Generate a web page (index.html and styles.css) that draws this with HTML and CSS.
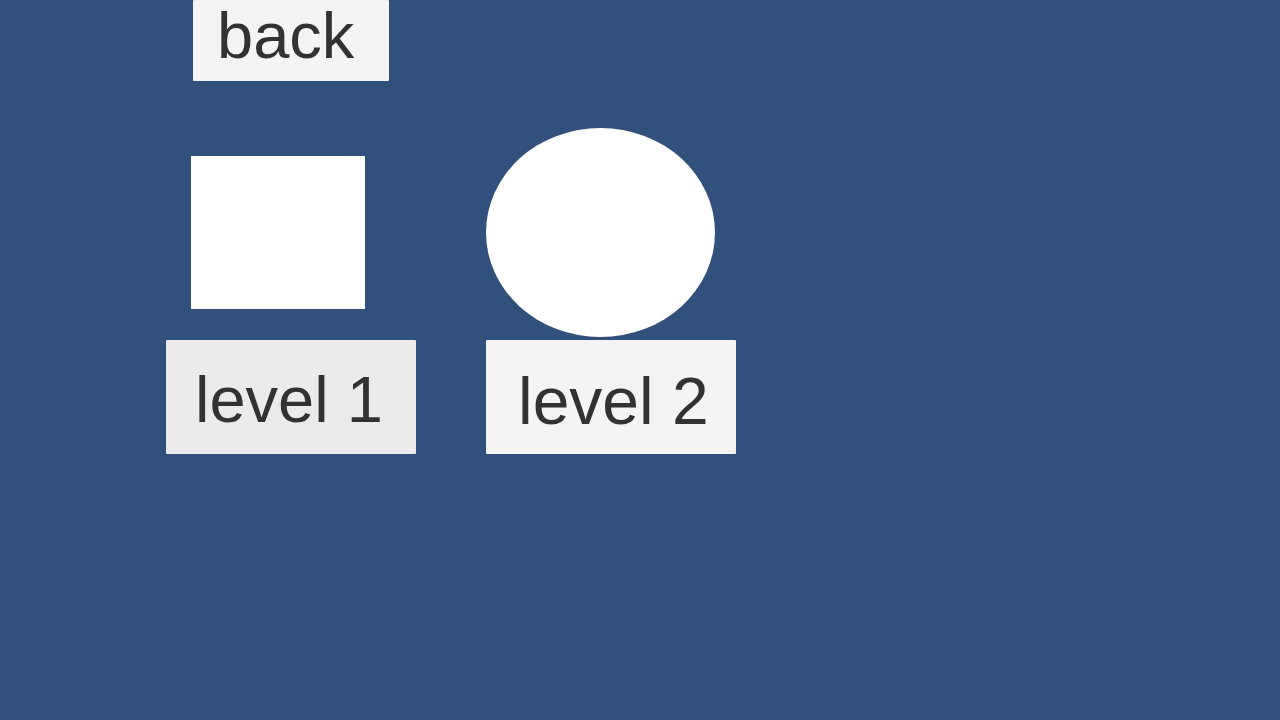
FILE: index.html
```html
<!DOCTYPE html>
<html>
<head>
<meta charset="utf-8">
<link rel="stylesheet" href="styles.css">
</head>
<body>
<div class="scene">
  <div class="btn btn-back"><span>back</span></div>
  <div class="spacer"></div>
  <div class="shape square"></div>
  <div class="shape circle"></div>
  <div class="btn btn-l1"><span>level 1</span></div>
  <div class="btn btn-l2"><span>level 2</span></div>
</div>
</body>
</html>
```
FILE: styles.css
```css
html, body {
  margin: 0;
  padding: 0;
  width: 1280px;
  height: 720px;
  overflow: hidden;
  background: #31507c;
}
.scene {
  display: grid;
  grid-template-columns: 250px 250px;
  grid-template-rows: 81px 259px 114px;
  column-gap: 70px;
  padding-left: 166px;
  font-family: "Liberation Sans", Arial, sans-serif;
  color: #323232;
}
.btn {
  box-sizing: border-box;
  line-height: 1;
  white-space: nowrap;
  border-radius: 1px;
}
.btn-back {
  margin-left: 27px;
  width: 196px;
  height: 81px;
  background: #f4f4f4;
  font-size: 65px;
  padding-top: 3px;
  padding-left: 24px;
}
.square {
  margin-top: 75px;
  margin-left: 25px;
  width: 174px;
  height: 153px;
  background: #ffffff;
}
.circle {
  margin-top: 47px;
  width: 229px;
  height: 209px;
  border-radius: 50%;
  background: #ffffff;
}
.btn-l1 {
  width: 250px;
  height: 114px;
  background: #ebebeb;
  font-size: 65px;
  padding-top: 27px;
  padding-left: 29px;
}
.btn-l2 {
  width: 250px;
  height: 114px;
  background: #f4f4f4;
  font-size: 66px;
  padding-top: 28px;
  padding-left: 32px;
}
```
